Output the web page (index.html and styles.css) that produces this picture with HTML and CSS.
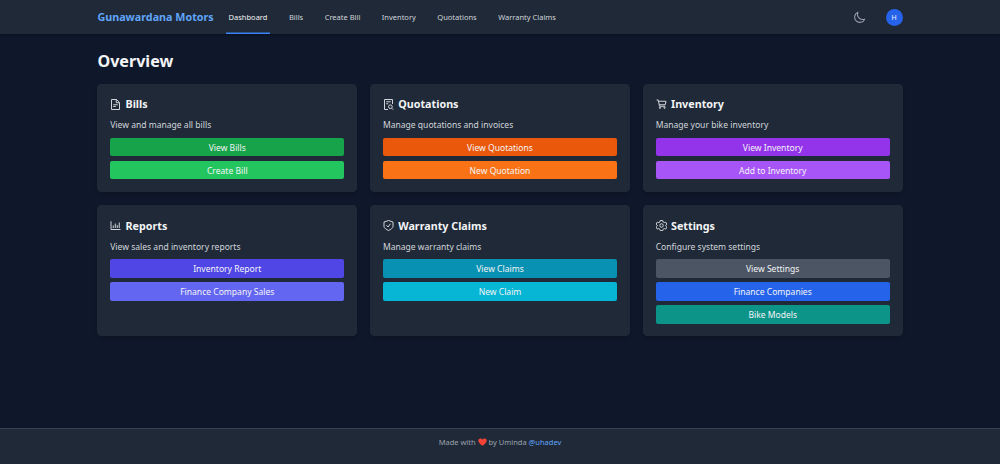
FILE: index.html
```html
<!DOCTYPE html>
<html lang="en">
<head>
    <meta charset="UTF-8">
    <meta name="viewport" content="width=device-width, initial-scale=1.0">
    <title>Gunawardana Motors</title>
    <link rel="stylesheet" href="styles.css">
</head>
<body>

    <header>
        <div class="container navbar">
            <a class="brand" href="#">Gunawardana Motors</a>
            <nav>
                <a class="active" href="#">Dashboard</a>
                <a href="#">Bills</a>
                <a href="#">Create Bill</a>
                <a href="#">Inventory</a>
                <a href="#">Quotations</a>
                <a href="#">Warranty Claims</a>
            </nav>
            <div class="user-menu">
                <svg class="moon" viewBox="0 0 24 24"><path d="M21.75 15A9.7 9.7 0 0 1 18 15.75 9.75 9.75 0 0 1 9 2.25 9.75 9.75 0 1 0 21.75 15z"/></svg>
                <span class="avatar">H</span>
            </div>
        </div>
    </header>

    <main class="container">
        <h1>Overview</h1>
        <div class="cards">
            <section class="card">
                <h2>
                    <svg class="icon" viewBox="0 0 22 22"><path d="M3 1h10l6 6v14H3zM12.500 1v6.500H19M6.500 11.500h9M6.500 15h5"/></svg>
                    Bills
                </h2>
                <p>View and manage all bills</p>
                <a class="btn green-dark" href="#">View Bills</a>
                <a class="btn green" href="#">Create Bill</a>
            </section>

            <section class="card">
                <h2>
                    <svg class="icon" viewBox="0 0 22 22"><path d="M10 21H3V1h16v9M6.500 5.500h9M6.500 9.500h4M17.500 18.500l3 3"/><circle cx="14.800" cy="15.500" r="3.700"/></svg>
                    Quotations
                </h2>
                <p>Manage quotations and invoices</p>
                <a class="btn orange-dark" href="#">View Quotations</a>
                <a class="btn orange" href="#">New Quotation</a>
            </section>

            <section class="card">
                <h2>
                    <svg class="icon" viewBox="0 0 22 22"><path d="M1 2h3.500l2.500 12.500h11.500M5 4.500H20l-1.500 7H6.500"/><circle cx="8" cy="17.500" r="1.400"/><circle cx="17" cy="17.500" r="1.400"/></svg>
                    Inventory
                </h2>
                <p>Manage your bike inventory</p>
                <a class="btn purple-dark" href="#">View Inventory</a>
                <a class="btn purple" href="#">Add to Inventory</a>
            </section>

            <section class="card">
                <h2>
                    <svg class="icon" viewBox="0 0 22 22"><path d="M2 2.500V19h19M6.500 16v-5M10.500 16V7M14.500 16v-6M18.500 16V5"/></svg>
                    Reports
                </h2>
                <p>View sales and inventory reports</p>
                <a class="btn indigo-dark" href="#">Inventory Report</a>
                <a class="btn indigo" href="#">Finance Company Sales</a>
            </section>

            <section class="card">
                <h2>
                    <svg class="icon" viewBox="0 0 22 22"><path d="M11 1l9 3v9c0 3-4.500 6-9 8-4.500-2-9-5-9-8V4zM7 10.500l3 3.500 5-6.500"/></svg>
                    Warranty Claims
                </h2>
                <p>Manage warranty claims</p>
                <a class="btn cyan-dark" href="#">View Claims</a>
                <a class="btn cyan" href="#">New Claim</a>
            </section>

            <section class="card">
                <h2>
                    <svg class="icon" viewBox="0 0 22 22"><path d="M8.500 1h5l.7 3 2.300 1.300 3-1 2.300 4-2.300 2.200v1.500l2.300 2.200-2.300 4-3-1-2.300 1.300-.7 2.700h-5l-.7-2.700-2.300-1.300-3 1-2.300-4L2.500 12v-1.500L.2 8.300l2.300-4 3 1L7.800 4z"/><circle cx="11" cy="11" r="3.500"/></svg>
                    Settings
                </h2>
                <p>Configure system settings</p>
                <a class="btn gray" href="#">View Settings</a>
                <a class="btn blue" href="#">Finance Companies</a>
                <a class="btn teal" href="#">Bike Models</a>
            </section>
        </div>
    </main>

    <footer>
        Made with
        <svg class="heart" viewBox="0 0 20 18"><path d="M10 17.500C4 13 .5 9.500.5 5.500c0-5 7-6.500 9.500-1.700C12.500-1 19.500.5 19.500 5.500c0 4-3.500 7.500-9.500 12z"/></svg>
        by Uminda <a href="#">@uhadev</a>
    </footer>

</body>
</html>
```
FILE: styles.css
```css
/* Global Styles */
* {
    box-sizing: border-box;
}

body {
    font-family: "Noto Sans", sans-serif;
    font-size: 8.55px;
    line-height: 12.8px;
    margin: 0;
    min-height: 100vh;
    display: flex;
    flex-direction: column;
    background-color: #0f172a;
    color: #f3f4f6;
}

a {
    text-decoration: none;
}

.container {
    width: 805.2px;
    margin: 0 auto;
}

/* Header Styles */
header {
    background-color: #1f2937;
    height: 34.3px;
    box-shadow: 0 1px 2px rgba(0, 0, 0, 0.3);
}

.navbar {
    display: flex;
    align-items: center;
    height: 100%;
}

.brand {
    width: 129px;
    padding-top: 1px;
    font-size: 10.75px;
    font-weight: bold;
    color: #60a5fa;
    white-space: nowrap;
}

nav {
    display: flex;
    height: 100%;
    gap: 17.1px;
}

nav a {
    display: flex;
    align-items: center;
    padding: 1px 2.2px 0;
    border-bottom: 1px solid transparent;
    font-size: 7.5px;
    color: #d1d5db;
    white-space: nowrap;
}

nav a.active {
    color: #f3f4f6;
    border-bottom-color: #3b82f6;
    box-shadow: inset 0 -0.5px #3b82f6;
}

.user-menu {
    display: flex;
    align-items: center;
    gap: 20px;
    margin-left: auto;
}

.moon {
    width: 13px;
    height: 13px;
    fill: none;
    stroke: #9ca3af;
    stroke-width: 2;
    stroke-linejoin: round;
}

.avatar {
    width: 17px;
    height: 17px;
    border-radius: 50%;
    background-color: #2563eb;
    font-size: 7px;
    line-height: 17px;
    text-align: center;
}

/* Cards */
h1 {
    margin: 17.7px 0 12.4px;
    font-size: 16.1px;
    line-height: 19.2px;
}

.cards {
    display: grid;
    grid-template-columns: repeat(3, 1fr);
    gap: 13px;
}

.card {
    padding: 12.8px;
    border-radius: 4.3px;
    background-color: #1f2937;
    box-shadow: 0 2px 3px rgba(0, 0, 0, 0.15);
}

.card h2 {
    display: flex;
    align-items: center;
    gap: 4.3px;
    margin: 0 0 6.9px;
    font-size: 10.75px;
    line-height: 16px;
}

.icon {
    width: 11px;
    height: 11px;
    fill: none;
    stroke: #d1d5db;
    stroke-width: 2;
}

.card p {
    margin: 0 0 5.9px;
    color: #d1d5db;
}

.btn {
    display: block;
    height: 18.5px;
    margin-top: 4.3px;
    border-radius: 2px;
    color: #f3f4f6;
    line-height: 20px;
    text-align: center;
}

.green-dark { background-color: #16a34a; }
.green { background-color: #22c55e; }
.orange-dark { background-color: #ea580c; }
.orange { background-color: #f97316; }
.purple-dark { background-color: #9333ea; }
.purple { background-color: #a855f7; }
.indigo-dark { background-color: #4f46e5; }
.indigo { background-color: #6366f1; }
.cyan-dark { background-color: #0891b2; }
.cyan { background-color: #06b6d4; }
.gray { background-color: #4b5563; }
.blue { background-color: #2563eb; }
.teal { background-color: #0d9488; }

/* Footer */
footer {
    height: 36px;
    margin-top: auto;
    padding-top: 6.8px;
    border-top: 1px solid #374151;
    background-color: #1f2937;
    color: #9ca3af;
    font-size: 7.5px;
    text-align: center;
}

footer a {
    color: #60a5fa;
}

.heart {
    width: 9px;
    height: 8px;
    fill: #f44336;
    vertical-align: -1.5px;
}
```
